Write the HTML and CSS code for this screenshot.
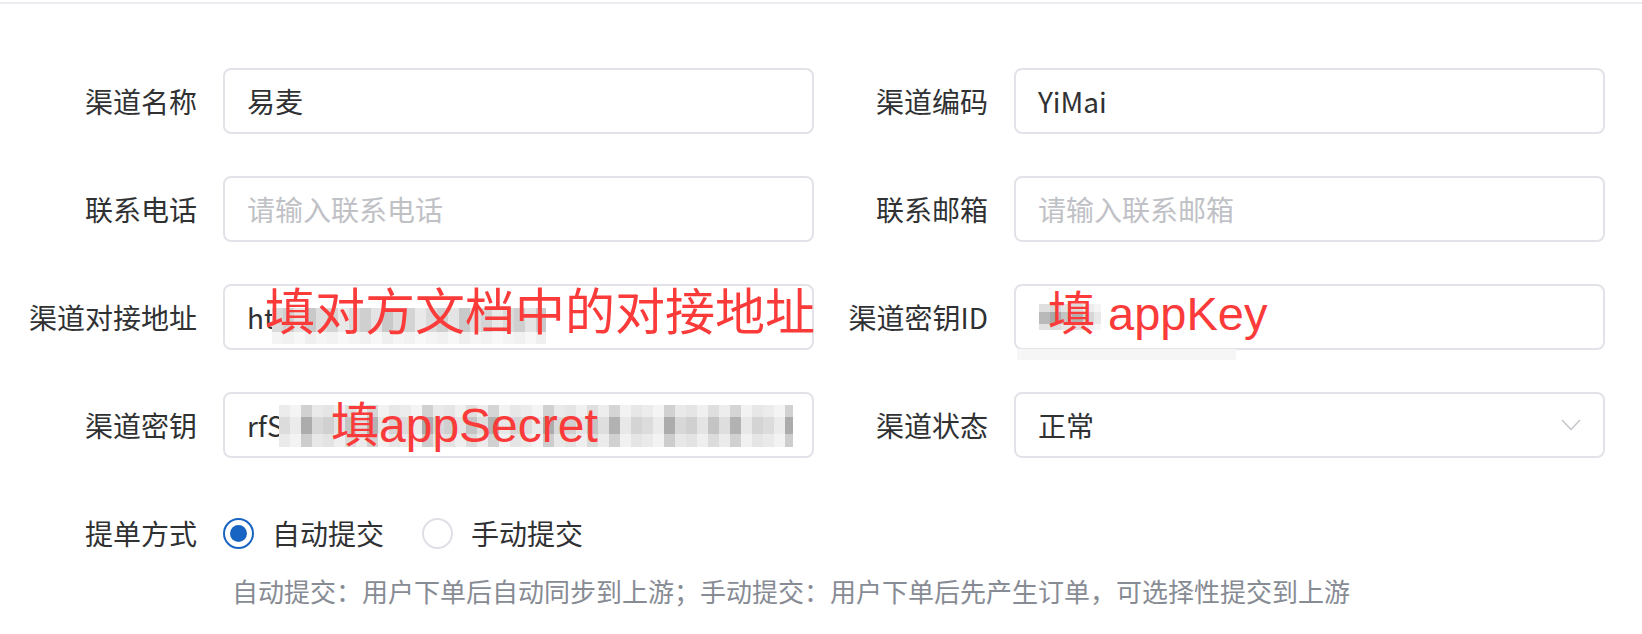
FILE: index.html
```html
<!DOCTYPE html>
<html lang="zh-CN">
<head>
<meta charset="utf-8">
<title>渠道编辑</title>
<link rel="stylesheet" href="styles.css">
</head>
<body>
<div class="topline"></div>
<form class="form">
  <div class="grid">
    <div class="item">
      <label class="label">渠道名称</label>
      <div class="input">易麦</div>
    </div>
    <div class="item">
      <label class="label">渠道编码</label>
      <div class="input">YiMai</div>
    </div>
    <div class="item">
      <label class="label">联系电话</label>
      <div class="input placeholder">请输入联系电话</div>
    </div>
    <div class="item">
      <label class="label">联系邮箱</label>
      <div class="input placeholder">请输入联系邮箱</div>
    </div>
    <div class="item">
      <label class="label">渠道对接地址</label>
      <div class="input">ht
        <div class="mosaic mosaic-url"></div>
        <span class="note note-url">填对方文档中的对接地址</span>
      </div>
    </div>
    <div class="item">
      <label class="label">渠道密钥ID</label>
      <div class="input">
        <div class="mosaic mosaic-key"></div>
        <div class="smudge"></div>
        <span class="note note-key">填 appKey</span>
      </div>
    </div>
    <div class="item">
      <label class="label">渠道密钥</label>
      <div class="input">rfS
        <div class="mosaic mosaic-secret"></div>
        <span class="note note-secret">填appSecret</span>
      </div>
    </div>
    <div class="item">
      <label class="label">渠道状态</label>
      <div class="input select">
        <span>正常</span>
        <svg class="chevron" width="20" height="12" viewBox="0 0 20 12"><polyline points="1,1 10,10.5 19,1" fill="none" stroke="#c3c5cc" stroke-width="1.5"/></svg>
      </div>
    </div>
  </div>

  <div class="item radio-item">
    <label class="label">提单方式</label>
    <div class="radio-control">
      <div class="radios">
        <span class="radio checked"><span class="circle"></span>自动提交</span>
        <span class="radio"><span class="circle"></span>手动提交</span>
      </div>
      <div class="help">自动提交：用户下单后自动同步到上游；手动提交：用户下单后先产生订单，可选择性提交到上游</div>
    </div>
  </div>
</form>
</body>
</html>
```

FILE: styles.css
```css
* { box-sizing: border-box; }

html, body {
  margin: 0;
  padding: 0;
  background: #ffffff;
}

body {
  font-family: "Noto Sans CJK SC", "Noto Sans", sans-serif;
  font-size: 28px;
  color: #303133;
}

.topline {
  height: 2px;
  margin-top: 2px;
  background: #ececf1;
}

.form {
  padding: 64px 0 0 23px;
}

.grid {
  display: grid;
  grid-template-columns: 791px 791px;
  row-gap: 42px;
}

.item {
  display: flex;
  align-items: center;
}

.label {
  width: 200px;
  flex: none;
  padding-right: 26px;
  text-align: right;
  color: #303133;
  line-height: 66px;
  white-space: nowrap;
}

.input {
  position: relative;
  width: 591px;
  height: 66px;
  border: 2px solid #e2e3e9;
  border-radius: 8px;
  padding: 0 22px;
  display: flex;
  align-items: center;
  color: #303133;
  white-space: nowrap;
}

.placeholder { color: #bfc1c6; }

.select { justify-content: space-between; padding-right: 22px; }

.chevron { display: block; }

.mosaic {
  position: absolute;
}

.mosaic-url {
  left: 47px;
  top: 22px;
  width: 274px;
  height: 36px;
  background-image:
    linear-gradient(to bottom, rgba(255,255,255,0) 0 24px, rgba(255,255,255,0.7) 24px),
    repeating-linear-gradient(90deg, #dadada 0 11px, #cfcfcf 11px 22px, #e4e4e4 22px 33px, #c9c9c9 33px 44px, #dedede 44px 55px, #d4d4d4 55px 66px, #e9e9e9 66px 77px);
}

.mosaic-key {
  left: 23px;
  top: 18px;
  width: 62px;
  height: 26px;
  background-image:
    linear-gradient(to bottom, rgba(255,255,255,0.55) 0 8px, rgba(255,255,255,0) 8px 20px, rgba(255,255,255,0.6) 20px),
    repeating-linear-gradient(90deg, #b9b9b9 0 11px, #a9a9a9 11px 22px, #c4c4c4 22px 33px, #b0b0b0 33px 44px, #d6d6d6 44px 55px, #e8e8e8 55px 66px);
}

.smudge {
  position: absolute;
  left: 1px;
  top: 63px;
  width: 219px;
  height: 11px;
  background: #f6f6f7;
}

.mosaic-secret {
  left: 54px;
  top: 11px;
  width: 514px;
  height: 42px;
  background-image:
    linear-gradient(to bottom, rgba(255,255,255,0.45) 0 12px, rgba(255,255,255,0) 12px 29px, rgba(255,255,255,0.4) 29px),
    repeating-linear-gradient(90deg, #dcdcdc 0 11px, #ebebeb 11px 22px, #acacac 22px 33px, #d8d8d8 33px 44px, #d0d0d0 44px 55px, #e4e4e4 55px 66px, #c4c4c4 66px 77px, #dedede 77px 88px, #b2b2b2 88px 99px, #e8e8e8 99px 110px, #d4d4d4 110px 121px);
}

.note {
  position: absolute;
  color: #fb3a3a;
  line-height: 1;
  white-space: nowrap;
  font-family: "Liberation Sans", "Noto Sans CJK SC", sans-serif;
}

.note-url {
  left: 40px;
  top: -3px;
  font-size: 50px;
  font-family: "Noto Sans CJK SC", sans-serif;
}

.note-key {
  left: 32px;
  top: 4px;
  font-size: 47px;
}

.note-secret {
  left: 106px;
  top: 8px;
  font-size: 48px;
}

.radio-item {
  margin-top: 42px;
  align-items: flex-start;
}

.radio-control {
  display: flex;
  flex-direction: column;
}

.radios {
  height: 66px;
  display: flex;
  align-items: center;
  gap: 38px;
}

.radio {
  display: flex;
  align-items: center;
  gap: 18px;
  color: #303133;
}

.circle {
  width: 31px;
  height: 31px;
  border-radius: 50%;
  border: 2px solid #dfe0e6;
  background: #fff;
  display: flex;
  align-items: center;
  justify-content: center;
}

.radio.checked .circle {
  border-color: #1864c2;
}

.radio.checked .circle::after {
  content: "";
  width: 17px;
  height: 17px;
  border-radius: 50%;
  background: #1864c2;
}

.help {
  margin-top: 6px;
  padding-left: 9px;
  font-size: 26px;
  line-height: 38px;
  color: #878b94;
  white-space: nowrap;
}
```
